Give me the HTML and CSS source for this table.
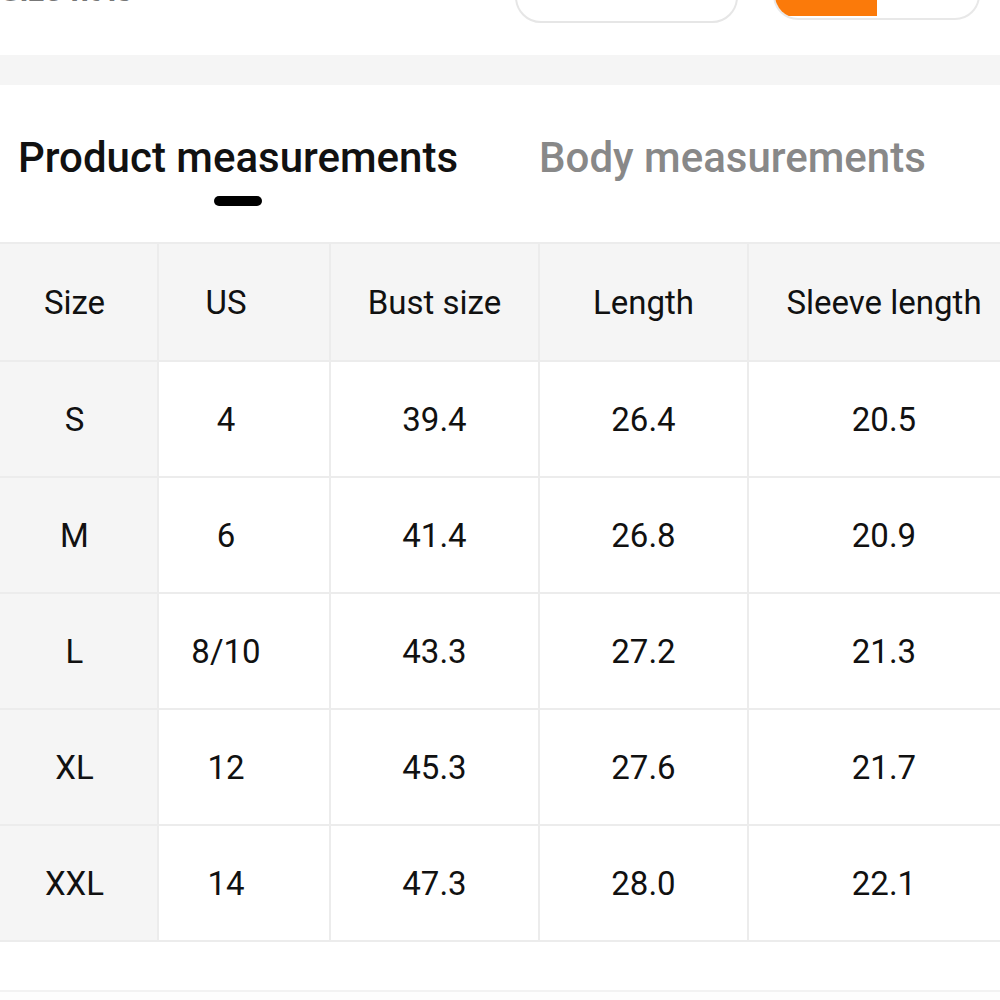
FILE: index.html
```html
<!DOCTYPE html>
<html lang="en">
<head>
    <meta charset="UTF-8">
    <meta name="viewport" content="width=device-width, initial-scale=1.0">
    <title>Size guide</title>
    <link rel="stylesheet" href="styles.css">
</head>
<body>

   <div class="top-bar">
        <p class="fit-title">Size fit is</p>
        <div class="fit-btn"></div>
        <div class="fit-slider">
            <span class="fit-fill"></span>
        </div>
   </div>

   <div class="grey-band"></div>

   <div class="tabs">
        <div class="tab active">
            <span>Product measurements</span>
            <i class="tab-line"></i>
        </div>
        <div class="tab">
            <span>Body measurements</span>
        </div>
   </div>

   <div class="table-wrap">
    <table class="size-table">
        <thead>
            <tr>
                <th class="col-size">Size</th>
                <th class="col-us">US</th>
                <th class="col-bust">Bust size</th>
                <th class="col-len">Length</th>
                <th class="col-sleeve">Sleeve length</th>
            </tr>
        </thead>
        <tbody>
            <tr>
                <td class="col-size">S</td>
                <td class="col-us">4</td>
                <td>39.4</td>
                <td>26.4</td>
                <td>20.5</td>
            </tr>
            <tr>
                <td class="col-size">M</td>
                <td class="col-us">6</td>
                <td>41.4</td>
                <td>26.8</td>
                <td>20.9</td>
            </tr>
            <tr>
                <td class="col-size">L</td>
                <td class="col-us">8/10</td>
                <td>43.3</td>
                <td>27.2</td>
                <td>21.3</td>
            </tr>
            <tr>
                <td class="col-size">XL</td>
                <td class="col-us">12</td>
                <td>45.3</td>
                <td>27.6</td>
                <td>21.7</td>
            </tr>
            <tr>
                <td class="col-size">XXL</td>
                <td class="col-us">14</td>
                <td>47.3</td>
                <td>28.0</td>
                <td>22.1</td>
            </tr>
        </tbody>
    </table>
   </div>

   <div class="bottom-line"></div>

</body>
</html>
```

FILE: styles.css
```css
*{
    margin: 0;
    padding: 0;
    box-sizing: border-box;
    font-family: Roboto, Arial, Helvetica, sans-serif;
}
body{
    width: 1000px;
    overflow: hidden;
    background-color: #fff;
    color: #1a1a1a;
}
.top-bar{
    height: 55px;
    display: flex;
    align-items: flex-start;
    overflow: hidden;
}
.fit-title{
    width: 515px;
    margin-top: -25px;
    font-size: 32px;
    font-weight: 700;
    color: #777;
    line-height: 30px;
}
.fit-btn{
    width: 223px;
    height: 52px;
    margin-top: -29px;
    border: 2px solid #e6e6e6;
    border-radius: 28px;
}
.fit-slider{
    width: 207px;
    height: 50px;
    margin-top: -30px;
    margin-left: 35px;
    border: 2px solid #e8e8e8;
    border-radius: 28px;
    overflow: hidden;
    display: flex;
}
.fit-fill{
    width: 104px;
    height: 100%;
    margin: -2px 0 -2px -2px;
    background-color: #fb7a0a;
}
.grey-band{
    height: 30px;
    background-color: #f5f5f5;
}
.tabs{
    height: 157px;
    display: flex;
    gap: 81px;
    padding-left: 18px;
    padding-top: 44px;
}
.tab{
    display: flex;
    flex-direction: column;
    align-items: center;
    font-size: 42px;
    font-weight: 500;
    line-height: 58px;
    color: #888;
}
.tab.active{
    color: #111;
}
.tab-line{
    display: block;
    width: 48px;
    height: 10px;
    margin-top: 9px;
    border-radius: 5px;
    background-color: #000;
}
.table-wrap{
    width: 1000px;
    overflow: hidden;
}
.size-table{
    width: 1020px;
    border-collapse: collapse;
    table-layout: fixed;
    font-size: 33px;
}
.size-table th,
.size-table td{
    text-align: center;
    vertical-align: middle;
    border: 2px solid #ececec;
    font-weight: 400;
    color: #111;
}
.size-table th{
    height: 118px;
    background-color: #f5f5f5;
}
.size-table td{
    height: 116px;
}
.size-table tr > :first-child{
    border-left: none;
}
.col-size{
    width: 158px;
    background-color: #f5f5f5;
    padding-right: 8px;
}
.col-us{
    width: 172px;
    padding-right: 36px;
}
.col-bust{
    width: 209px;
}
.col-len{
    width: 209px;
}
.col-sleeve{
    width: 272px;
}
.bottom-line{
    margin-top: 48px;
    height: 10px;
    border-top: 2px solid #f2f2f2;
    background-color: #fdfdfd;
}
```
